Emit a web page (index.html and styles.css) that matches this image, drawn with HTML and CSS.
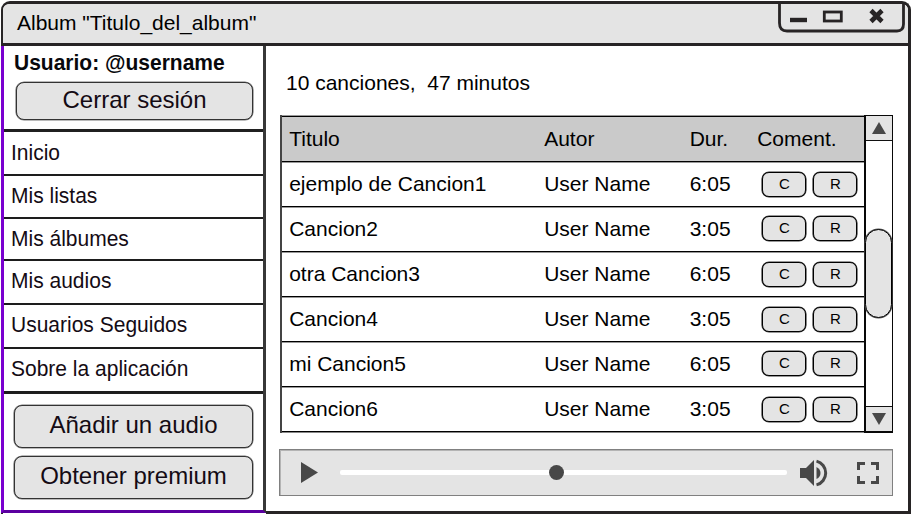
FILE: index.html
```html
<!DOCTYPE html>
<html lang="es">
<head>
<meta charset="utf-8">
<title>Album</title>
<link rel="stylesheet" href="styles.css">
</head>
<body>
<div class="window">
  <header class="titlebar">
    <h1 class="title">Album "Titulo_del_album"</h1>
    <div class="controls">
      <svg width="127" height="32" viewBox="0 0 127 32">
        <path d="M1.500 0V19Q1.500 27 9 27H119Q125.500 27 125.500 20V0" fill="none" stroke="#272425" stroke-width="2.800"/>
        <path d="M12 16H29" stroke="#272425" stroke-width="4.400"/>
        <rect x="46.300" y="8" width="17" height="9" fill="none" stroke="#272425" stroke-width="2.800"/>
        <path d="M93 6.500L104 17.500M104 6.500L93 17.500" stroke="#272425" stroke-width="4.600"/>
      </svg>
    </div>
  </header>
  <div class="body">
    <aside class="sidebar">
      <section class="account">
        <p class="user"><span>Usuario: @username</span></p>
        <button class="big-btn logout">Cerrar sesión</button>
      </section>
      <nav class="menu">
        <a><span>Inicio</span></a>
        <a><span>Mis listas</span></a>
        <a><span>Mis álbumes</span></a>
        <a><span>Mis audios</span></a>
        <a><span>Usuarios Seguidos</span></a>
        <a><span>Sobre la aplicación</span></a>
      </nav>
      <section class="actions">
        <button class="big-btn">Añadir un audio</button>
        <button class="big-btn">Obtener premium</button>
      </section>
    </aside>
    <main class="content">
      <p class="summary">10 canciones,&nbsp; 47 minutos</p>
      <div class="list">
        <div class="songs">
          <div class="row head"><span>Titulo</span><span>Autor</span><span>Dur.</span><span>Coment.</span></div>
          <div class="row"><span>ejemplo de Cancion1</span><span>User Name</span><span>6:05</span><div class="btns"><button>C</button><button>R</button></div></div>
          <div class="row"><span>Cancion2</span><span>User Name</span><span>3:05</span><div class="btns raised"><button>C</button><button>R</button></div></div>
          <div class="row"><span>otra Cancion3</span><span>User Name</span><span>6:05</span><div class="btns"><button>C</button><button>R</button></div></div>
          <div class="row"><span>Cancion4</span><span>User Name</span><span>3:05</span><div class="btns"><button>C</button><button>R</button></div></div>
          <div class="row"><span>mi Cancion5</span><span>User Name</span><span>6:05</span><div class="btns raised"><button>C</button><button>R</button></div></div>
          <div class="row"><span>Cancion6</span><span>User Name</span><span>3:05</span><div class="btns"><button>C</button><button>R</button></div></div>
        </div>
        <div class="scrollbar">
          <div class="arrow up"><svg width="14" height="12" viewBox="0 0 14 12"><path d="M7 0L14 12H0Z" fill="#484848"/></svg></div>
          <div class="track"><div class="thumb"></div></div>
          <div class="arrow down"><svg width="14" height="12" viewBox="0 0 14 12"><path d="M0 0H14L7 12Z" fill="#484848"/></svg></div>
        </div>
      </div>
      <div class="player">
        <svg class="play" width="17" height="21" viewBox="0 0 17 21"><path d="M0 0L17 10.500L0 21Z" fill="#484848"/></svg>
        <div class="seek"><div class="knob"></div></div>
        <svg class="volume" width="28" height="28" viewBox="0 0 28 28">
          <path d="M0 9H6L14 1V27L6 19H0Z" fill="#484848"/>
          <path d="M16.500 8Q20.500 10 20.500 14T16.500 20Z" fill="#484848"/>
          <path d="M16.500 2.100C22 3.500 25.700 8.500 25.700 14S22 24.500 16.500 25.900" fill="none" stroke="#484848" stroke-width="3"/>
        </svg>
        <svg class="full" width="22" height="22" viewBox="0 0 22 22"><path d="M1.500 8V1.500H8M14 1.500H20.500V8M20.500 14V20.500H14M8 20.500H1.500V14" fill="none" stroke="#484848" stroke-width="3"/></svg>
      </div>
    </main>
  </div>
</div>
</body>
</html>
```
FILE: styles.css
```css
* { box-sizing: border-box; }
body {
  margin: 0;
  height: 514px;
  overflow: hidden;
  background: #fff;
  font-family: "Liberation Sans", Arial, sans-serif;
  font-size: 21px;
  line-height: 24px;
  color: #000;
}
p, h1 { margin: 0; }
button { font-family: inherit; color: inherit; padding: 0; background: #e4e4e4; }
.window {
  width: 910px;
  height: 513px;
  margin: 1px 0 0 1px;
  border: 3px solid #272425;
  border-bottom: 0;
  border-left-width: 2px;
  border-radius: 9px 9px 0 0;
  display: flex;
  flex-direction: column;
}
.titlebar {
  height: 42px;
  flex: none;
  display: flex;
  justify-content: space-between;
  background: #e4e4e4;
  border-bottom: 3px solid #272425;
  border-radius: 6px 6px 0 0;
}
.title { font-size: 21px; font-weight: normal; padding: 7px 0 0 14px; }
.controls { margin-right: 3.500px; }
.controls svg { display: block; }
.body { flex: 1; display: flex; margin-left: -2px; }
.sidebar {
  width: 265px;
  flex: none;
  background: #fff;
  border-left: 3px solid #7900cf;
  border-right: 3px solid #383838;
  border-bottom: 3px solid #5b00a0;
  margin-bottom: 1px;
  color: #140b14;
}
.account { height: 86px; padding: 5px 9px 0 10px; border-bottom: 3px solid #202020; }
.user { font-weight: bold; color: #08080c; }
.user span, .menu span { display: inline-block; transform: scaleY(1.05); }
.big-btn {
  display: block;
  width: 239px;
  height: 43px;
  font-size: 24px;
  line-height: 36px;
  padding-bottom: 3px;
  border: 1px solid #333;
  border-radius: 8px;
  box-shadow: 0 0 0 .6px #777;
}
.logout { width: 237px; height: 38px; line-height: 33px; margin: 7px 0 0 2px; }
.menu { display: grid; grid-template-rows: 44px 43px 42px 44px 44px 44px; border-bottom: 1px solid #202020; }
.menu a { padding: 8px 0 0 7px; border-bottom: 2px solid #1d1d1d; }
.menu a:first-child { padding-top: 9px; }
.actions { display: grid; gap: 8px; padding: 11px 0 0 10px; }
.content { flex: 1; min-width: 0; padding: 25px 15px 0 14px; border-bottom: 3px solid #272425; }
.summary { padding-left: 6px; }
.list { display: flex; margin-top: 20px; }
.songs { width: 584px; height: 318px; border-left: 2px solid #444; }
.row {
  height: 45px;
  display: grid;
  grid-template-columns: 255px 145.500px 67.500px 1fr;
  padding: 9px 0 0 7.200px;
  border-top: 1px solid #999;
  border-bottom: 1px solid #000;
}
.row:last-child { box-shadow: 0 1px #888; }
.head { height: 47px; padding-top: 11px; background: #cacaca; box-shadow: inset 0 1px #000; }
.btns { display: flex; gap: 7px; padding: 0 0 0 5.300px; }
.btns button {
  width: 44px;
  height: 25px;
  font-size: 15px;
  line-height: 20px;
  padding-bottom: 1px;
  border: 1px solid #000;
  border-radius: 7px;
  box-shadow: 0 0 0 .6px #333;
}
.raised { margin-top: -1px; }
.scrollbar {
  width: 29px;
  height: 318px;
  display: flex;
  flex-direction: column;
  border: 2px solid #080808;
  border-top-width: 1px;
  border-right-width: 1px;
}
.arrow { height: 24px; flex: none; display: flex; align-items: center; justify-content: center; background: #e4e4e4; }
.up { height: 25px; border-bottom: 1px solid #111; }
.down { border-top: 1px solid #111; height: 25px; }
.track { flex: 1; padding-top: 88px; }
.thumb { height: 89px; margin: 0 0 0 -1px; border: 1px solid #000; box-shadow: 0 0 0 .5px #555; border-radius: 14px; background: #e4e4e4; }
.player {
  width: 614px;
  height: 47px;
  margin: 16px 0 0 -1px;
  display: flex;
  align-items: center;
  padding-left: 21px;
  border: 1px solid #808080;
  box-shadow: inset 1px 1px #b4b4b4;
  background: #e4e4e4;
}
.seek { width: 447px; height: 5px; margin-left: 22px; border-radius: 2px; background: #fff; }
.knob { width: 15px; height: 15px; margin: -5px 0 0 209px; border-radius: 50%; background: #484848; }
.volume { margin-left: 13px; }
.full { margin-left: 29px; }
```
